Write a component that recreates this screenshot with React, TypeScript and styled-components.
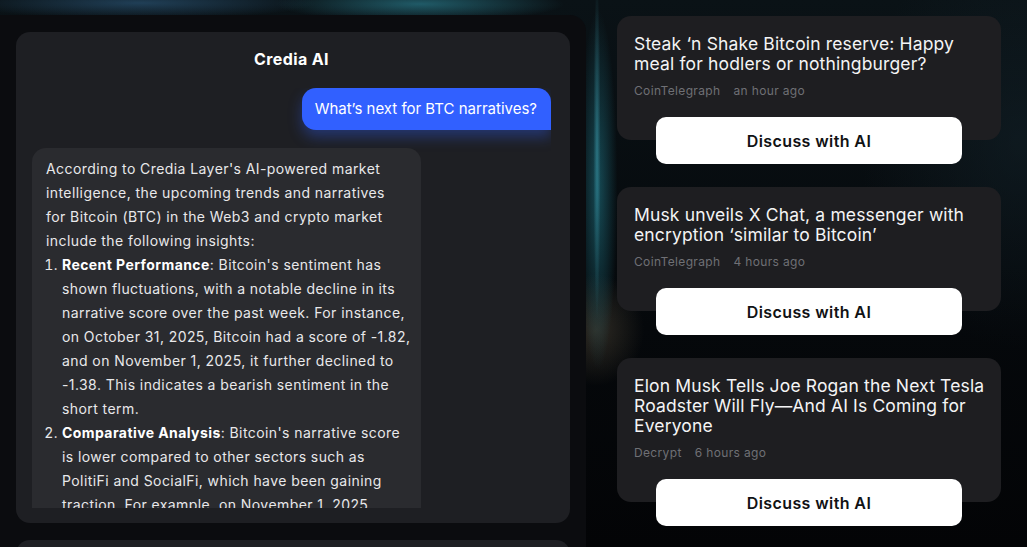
import React from "react";
import styled, { createGlobalStyle } from "styled-components";

const GlobalStyle = createGlobalStyle`
  html, body {
    margin: 0;
    padding: 0;
    height: 100%;
  }
  body {
    font-family: "Inter", "Noto Sans", sans-serif;
    color: #ffffff;
    background-color: #04070a;
    background-image:
      radial-gradient(ellipse 4px 190px at 597px 150px, rgba(70, 180, 200, 0.45), transparent 90%),
      radial-gradient(ellipse 26px 240px at 598px 190px, rgba(40, 150, 170, 0.45), transparent 75%),
      radial-gradient(ellipse 180px 22px at 420px 4px, rgba(50, 150, 170, 0.55), transparent 80%),
      radial-gradient(ellipse 220px 20px at 140px 3px, rgba(50, 100, 140, 0.55), transparent 80%),
      radial-gradient(ellipse 60px 70px at 596px 330px, rgba(120, 105, 80, 0.35), transparent 80%),
      radial-gradient(ellipse 200px 260px at 1020px 140px, rgba(20, 36, 44, 0.5), transparent 80%),
      linear-gradient(180deg, #0a1216 0%, #05080b 60%, #030406 100%);
    overflow: hidden;
  }
`;

const Page = styled.div`
  display: grid;
  grid-template-columns: 586px 384px;
  column-gap: 31px;
  height: 547px;
  overflow: hidden;
`;

const LeftPanel = styled.section`
  margin-top: 15px;
  background: #0b0c0f;
  border-top-right-radius: 16px;
  padding: 17px 16px 0 16px;
  display: flex;
  flex-direction: column;
  gap: 17px;
`;

const ChatCard = styled.div`
  flex: none;
  height: 491px;
  box-sizing: border-box;
  background: #1e1f23;
  border-radius: 14px;
  padding: 17px 19px 15px 16px;
  display: flex;
  flex-direction: column;
`;

const NextCard = styled.div`
  flex: none;
  height: 60px;
  background: #1e1f23;
  border-radius: 14px 14px 0 0;
`;

const ChatTitle = styled.h2`
  margin: 0;
  text-align: center;
  font-size: 16px;
  line-height: 20px;
  font-weight: 700;
  letter-spacing: 0.4px;
  color: #ffffff;
`;

const Messages = styled.div`
  flex: 1;
  min-height: 0;
  overflow: hidden;
  margin-top: 19px;
  display: flex;
  flex-direction: column;
  align-items: flex-start;
  gap: 18px;
`;

const UserBubble = styled.div`
  align-self: flex-end;
  background: #3160ff;
  color: #ffffff;
  font-size: 15px;
  line-height: 22px;
  padding: 10px 14px 10px 13px;
  border-radius: 14px 14px 0 14px;
  box-shadow: 0 7px 14px rgba(49, 96, 255, 0.35);
  white-space: nowrap;
`;

const AiBubble = styled.div`
  width: 389px;
  box-sizing: border-box;
  flex: 1;
  min-height: 0;
  overflow: hidden;
  background: #2a2b2f;
  border-radius: 14px 14px 0 0;
  padding: 9px 8px 0 14px;
  font-size: 14px;
  line-height: 24px;
  letter-spacing: 0.42px;
  color: #e8e8ea;
  white-space: nowrap;
`;

const Para = styled.p`
  margin: 0;
`;

const List = styled.ol`
  margin: 0;
  padding-left: 16px;
`;

const Strong = styled.b`
  color: #ffffff;
  font-weight: 700;
`;

const RightColumn = styled.section`
  padding-top: 16px;
  display: flex;
  flex-direction: column;
  gap: 23px;
`;

const NewsItem = styled.article`
  display: flex;
  flex-direction: column;
  align-items: center;
`;

const NewsCard = styled.div`
  align-self: stretch;
  background: #1e1e21;
  border-radius: 14px;
  padding: 18px 12px 41px 17px;
`;

const NewsTitle = styled.h3`
  margin: 0;
  font-size: 17.5px;
  line-height: 20px;
  font-weight: 400;
  letter-spacing: 0.15px;
  color: #f4f4f5;
  white-space: nowrap;
`;

const Meta = styled.div`
  margin-top: 9px;
  display: flex;
  gap: 13px;
  font-size: 12px;
  line-height: 16px;
  letter-spacing: 0.35px;
  color: #6f7075;
`;

const DiscussButton = styled.button`
  margin-top: -23px;
  width: 306px;
  height: 47px;
  border: none;
  border-radius: 10px;
  background: #ffffff;
  color: #111214;
  font-family: inherit;
  font-size: 16px;
  font-weight: 600;
  letter-spacing: 0.4px;
  cursor: pointer;
`;

const news = [
  {
    lines: ["Steak \u2018n Shake Bitcoin reserve: Happy", "meal for hodlers or nothingburger?"],
    source: "CoinTelegraph",
    time: "an hour ago",
  },
  {
    lines: ["Musk unveils X Chat, a messenger with", "encryption \u2018similar to Bitcoin\u2019"],
    source: "CoinTelegraph",
    time: "4 hours ago",
  },
  {
    lines: [
      "Elon Musk Tells Joe Rogan the Next Tesla",
      "Roadster Will Fly\u2014And AI Is Coming for",
      "Everyone",
    ],
    source: "Decrypt",
    time: "6 hours ago",
  },
];

export default function App() {
  return (
    <>
      <GlobalStyle />
      <Page>
        <LeftPanel>
          <ChatCard>
            <ChatTitle>Credia AI</ChatTitle>
            <Messages>
              <UserBubble>What’s next for BTC narratives?</UserBubble>
              <AiBubble>
                <Para>
                  According to Credia Layer's AI-powered market
                  <br />
                  intelligence, the upcoming trends and narratives
                  <br />
                  for Bitcoin (BTC) in the Web3 and crypto market
                  <br />
                  include the following insights:
                </Para>
                <List>
                  <li>
                    <Strong>Recent Performance</Strong>: Bitcoin's sentiment has
                    <br />
                    shown fluctuations, with a notable decline in its
                    <br />
                    narrative score over the past week. For instance,
                    <br />
                    on October 31, 2025, Bitcoin had a score of -1.82,
                    <br />
                    and on November 1, 2025, it further declined to
                    <br />
                    -1.38. This indicates a bearish sentiment in the
                    <br />
                    short term.
                  </li>
                  <li>
                    <Strong>Comparative Analysis</Strong>: Bitcoin's narrative score
                    <br />
                    is lower compared to other sectors such as
                    <br />
                    PolitiFi and SocialFi, which have been gaining
                    <br />
                    traction. For example, on November 1, 2025,
                  </li>
                </List>
              </AiBubble>
            </Messages>
          </ChatCard>
          <NextCard />
        </LeftPanel>
        <RightColumn>
          {news.map((n) => (
            <NewsItem key={n.lines[0]}>
              <NewsCard>
                <NewsTitle>
                  {n.lines.map((line, i) => (
                    <React.Fragment key={line}>
                      {i > 0 && <br />}
                      {line}
                    </React.Fragment>
                  ))}
                </NewsTitle>
                <Meta>
                  <span>{n.source}</span>
                  <span>{n.time}</span>
                </Meta>
              </NewsCard>
              <DiscussButton>Discuss with AI</DiscussButton>
            </NewsItem>
          ))}
        </RightColumn>
      </Page>
    </>
  );
}
